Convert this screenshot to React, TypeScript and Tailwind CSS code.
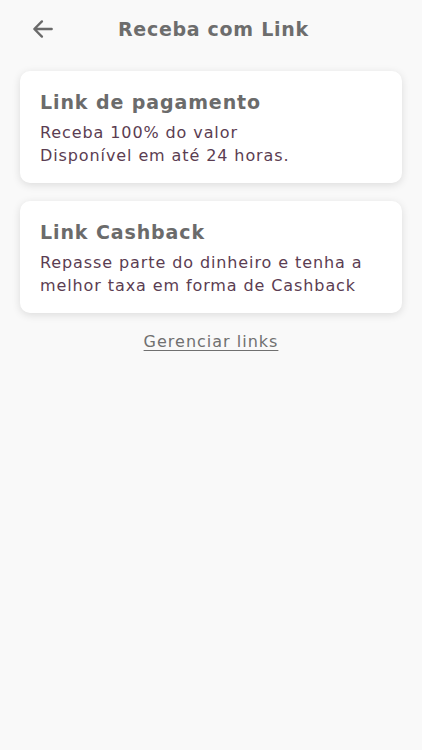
const cards = [
  {
    id: 1,
    title: "Link de pagamento",
    lines: ["Receba 100% do valor", "Disponível em até 24 horas."],
  },
  {
    id: 2,
    title: "Link Cashback",
    lines: ["Repasse parte do dinheiro e tenha a", "melhor taxa em forma de Cashback"],
  },
];

const App = () => {
  return (
    <div
      className="min-h-[750px] w-full bg-[#f9f9f9]"
      style={{ fontFamily: '"DejaVu Sans", "Open Sans", sans-serif' }}
    >
      <header className="flex items-center h-[58px] px-[30px]">
        <button className="w-[26px] h-[26px] flex items-center justify-center text-[#6a6a6a]">
          <svg width="26" height="26" viewBox="0 0 24 24" fill="none">
            <path
              d="M20 12H4.5M11 5l-7 7 7 7"
              stroke="currentColor"
              strokeWidth="2.2"
              strokeLinecap="round"
              strokeLinejoin="round"
            />
          </svg>
        </button>
        <h1 className="ml-[62px] text-[19px] font-bold text-[#6d6d6d] tracking-[0.7px]">
          Receba com Link
        </h1>
      </header>

      <div className="flex flex-col gap-[18px] px-[20px] pt-[13px]">
        {cards.map((card) => (
          <div
            key={card.id}
            className="bg-white rounded-[10px] h-[112px] px-[20px] pt-[19px] shadow-[0_2px_8px_rgba(0,0,0,0.12)]"
          >
            <h2 className="text-[19px] font-bold text-[#6b6b6b] leading-[24px] tracking-[0.9px]">
              {card.title}
            </h2>
            <div className="pt-[7px] text-[16px] leading-[23px] text-[#5b3d52] tracking-[0.9px]">
              {card.lines.map((line) => (
                <p key={line}>{line}</p>
              ))}
            </div>
          </div>
        ))}
      </div>

      <div className="flex justify-center pt-[17px]">
        <a className="text-[16px] text-[#707070] underline underline-offset-[3px] tracking-[1px]">
          Gerenciar links
        </a>
      </div>
    </div>
  );
};

export default App;
